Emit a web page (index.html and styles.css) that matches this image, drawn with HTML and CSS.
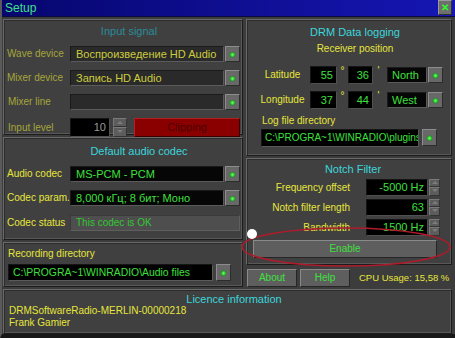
FILE: index.html
```html
<!DOCTYPE html>
<html lang="en">
<head>
    <meta charset="UTF-8">
    <title>Setup</title>
    <link rel="stylesheet" href="styles.css">
</head>
<body>
    <div class="window">
        <div class="titlebar">
            <span class="title">Setup</span>
            <span class="close">✕</span>
        </div>

        <div class="main">
            <div class="col">
                <!-- входной сигнал (неактивен) -->
                <section class="panel signal-panel off">
                    <div class="ptitle">Input signal</div>
                    <div class="row">
                        <label>Wave device</label>
                        <div class="combo"><span class="field">Воспроизведение HD Audio</span><span class="dbtn"></span></div>
                    </div>
                    <div class="row">
                        <label>Mixer device</label>
                        <div class="combo"><span class="field">Запись HD Audio</span><span class="dbtn"></span></div>
                    </div>
                    <div class="row">
                        <label class="indent">Mixer line</label>
                        <div class="combo"><span class="field"></span><span class="dbtn"></span></div>
                    </div>
                    <div class="row level-row">
                        <label class="indent">Input level</label>
                        <span class="numbox level">10</span>
                        <span class="spin"><i class="up"></i><i class="down"></i></span>
                        <span class="clipping">Clipping</span>
                    </div>
                </section>

                <section class="panel codec-panel">
                    <div class="ptitle">Default audio codec</div>
                    <div class="row">
                        <label>Audio codec</label>
                        <div class="combo"><span class="field">MS-PCM - PCM</span><span class="dbtn"></span></div>
                    </div>
                    <div class="row">
                        <label>Codec param.</label>
                        <div class="combo"><span class="field">8,000 кГц; 8 бит; Моно</span><span class="dbtn"></span></div>
                    </div>
                    <div class="row status-row">
                        <label>Codec status</label>
                        <span class="status">This codec is OK</span>
                    </div>
                </section>

                <section class="panel rec-panel">
                    <div class="plabel">Recording directory</div>
                    <div class="path-row">
                        <span class="path rec-path">C:\PROGRA~1\WINRADIO\Audio files</span>
                        <span class="dbtn"></span>
                    </div>
                </section>
            </div>

            <div class="col">
                <section class="panel drm-panel">
                    <div class="ptitle">DRM Data logging</div>
                    <div class="subtitle">Receiver position</div>
                    <div class="pos-row">
                        <label>Latitude</label>
                        <span class="numbox deg">55</span>
                        <span class="unit">°</span>
                        <span class="numbox min">36</span>
                        <span class="unit">'</span>
                        <div class="combo dir"><span class="field">North</span><span class="dbtn"></span></div>
                    </div>
                    <div class="pos-row">
                        <label>Longitude</label>
                        <span class="numbox deg">37</span>
                        <span class="unit">°</span>
                        <span class="numbox min">44</span>
                        <span class="unit">'</span>
                        <div class="combo dir"><span class="field">West</span><span class="dbtn"></span></div>
                    </div>
                    <div class="plabel log-label">Log file directory</div>
                    <div class="path-row log-row">
                        <span class="path log-path">C:\PROGRA~1\WINRADIO\plugins</span>
                        <span class="dbtn"></span>
                    </div>
                </section>

                <section class="panel notch-panel">
                    <div class="ptitle">Notch Filter</div>
                    <div class="notch-row">
                        <label>Frequency offset</label>
                        <span class="numbox val">-5000 Hz</span>
                        <span class="spin"><i class="up"></i><i class="down"></i></span>
                    </div>
                    <div class="notch-row">
                        <label>Notch filter length</label>
                        <span class="numbox val">63</span>
                        <span class="spin"><i class="up"></i><i class="down"></i></span>
                    </div>
                    <div class="notch-row">
                        <label>Bandwidth</label>
                        <span class="numbox val">1500 Hz</span>
                        <span class="spin"><i class="up"></i><i class="down"></i></span>
                    </div>
                    <button class="btn enable">Enable</button>
                </section>

                <div class="bottom-row">
                    <button class="btn small">About</button>
                    <button class="btn small">Help</button>
                    <span class="cpu">CPU Usage: 15,58 %</span>
                </div>
            </div>
        </div>

        <section class="panel licence-panel">
            <div class="ptitle">Licence information</div>
            <div class="lic-text">DRMSoftwareRadio-MERLIN-00000218</div>
            <div class="lic-text">Frank Gamier</div>
        </section>

        <!-- пометка поверх скриншота -->
        <svg class="mark" width="455" height="338" viewBox="0 0 455 338">
            <ellipse cx="346" cy="247" rx="104" ry="19" fill="none" stroke="#b01a2a" stroke-width="1.5"/>
            <circle cx="252" cy="234" r="5" fill="#ffffff"/>
        </svg>
    </div>
</body>
</html>
```

FILE: styles.css
```css
:root{
    --back: #3c3c3c;
    --panel: #404040;
    --light: #6a6a6a;
    --dark: #1c1c1c;
    --yellow: #e6e63c;
    --green: #3ee03e;
    --cyan: #3cd6dc;
    --btn: #5e5e5e;
}
* {
    box-sizing: border-box;
}
html, body {
    margin: 0;
    padding: 0;
    background: #000;
}
body {
    font-family: "Liberation Sans", Arial, sans-serif;
    font-size: 10px;
    color: var(--yellow);
}
.window {
    position: relative;
    width: 455px;
    height: 338px;
    background-color: var(--back);
    border-left: 2px solid #5a5a5a;
    border-bottom: 4px solid #181818;
    display: flex;
    flex-direction: column;
    overflow: hidden;
}
.titlebar {
    height: 17px;
    margin-left: -2px;
    background: linear-gradient(90deg, #06066e, #1616b4);
    display: flex;
    align-items: center;
    justify-content: space-between;
    padding: 0 3px 0 5px;
    border-bottom: 1px solid #0a0a40;
}
.title {
    color: #40e08a;
    font-size: 12px;
}
.close {
    width: 14px;
    height: 15px;
    background: #6e6e6e;
    border: 1px solid;
    border-color: #9a9a9a #303030 #303030 #9a9a9a;
    color: #2cff2c;
    font-size: 10px;
    font-weight: bold;
    line-height: 13px;
    text-align: center;
}
.main {
    display: grid;
    grid-template-columns: 240px 206px;
    gap: 3px;
    padding: 2px 0 0 1px;
}
.col {
    display: flex;
    flex-direction: column;
    gap: 2px;
}
.panel {
    background: var(--panel);
    border: 1px solid;
    border-color: var(--light) var(--dark) var(--dark) var(--light);
    box-shadow: inset 1px 1px 0 #2c2c2c, inset -1px -1px 0 #585858;
}
.ptitle {
    color: var(--cyan);
    font-size: 11px;
    line-height: 14px;
    height: 14px;
    text-align: center;
}
label {
    display: block;
    width: 63px;
    flex: none;
    white-space: nowrap;
}
.indent {
    padding-left: 1px;
}
.row {
    display: flex;
    align-items: center;
    height: 16px;
    margin-top: 8px;
    padding-left: 3px;
}

/* комбобоксы */
.combo {
    display: flex;
    height: 16px;
}
.field {
    width: 154px;
    height: 16px;
    background: #060606;
    border: 1px solid;
    border-color: #1a1a1a #5a5a5a #5a5a5a #1a1a1a;
    color: var(--green);
    font-size: 11px;
    line-height: 14px;
    padding-left: 5px;
    white-space: nowrap;
    overflow: hidden;
}
.dbtn {
    width: 15px;
    height: 16px;
    margin-left: 1px;
    background: radial-gradient(circle at 50% 55%, #7dff7d 0, #2ed62e 1.6px, #2a8a2a 2.6px, transparent 3.2px), #686868;
    border: 1px solid;
    border-color: #8c8c8c #2c2c2c #2c2c2c #8c8c8c;
    flex: none;
}

/* входной сигнал — неактивная панель */
.signal-panel {
    height: 116px;
    padding-top: 4px;
}
.signal-panel .ptitle {
    padding-left: 12px;
}
.off .ptitle {
    color: #2a8c98;
}
.off label {
    color: #a6a63a;
}
.off .field {
    background: #2a2a2a;
    color: #cccc3e;
}
.signal-panel .row:first-of-type {
    margin-top: 3px;
}
.level-row {
    height: 19px;
}
.numbox {
    display: block;
    height: 19px;
    background: #000;
    border: 1px solid;
    border-color: #151515 #505050 #505050 #151515;
    color: var(--green);
    font-size: 11px;
    line-height: 17px;
    text-align: right;
    padding-right: 3px;
    flex: none;
}
.level {
    width: 40px;
    color: #9a9a9a;
}
.spin {
    display: flex;
    flex-direction: column;
    width: 14px;
    height: 19px;
    margin-left: 3px;
    flex: none;
}
.spin i {
    flex: 1;
    background: #5c5c5c;
    border: 1px solid;
    border-color: #7a7a7a #333 #333 #7a7a7a;
    position: relative;
}
.spin i::after {
    content: "";
    position: absolute;
    left: 3px;
    top: 2px;
    border-left: 3px solid transparent;
    border-right: 3px solid transparent;
}
.spin .up::after {
    border-bottom: 3px solid #7c7c7c;
}
.spin .down::after {
    border-top: 3px solid #7c7c7c;
}
.clipping {
    width: 106px;
    height: 19px;
    margin-left: 7px;
    background: #8a0000;
    border: 1px solid;
    border-color: #b02020 #3a0000 #3a0000 #b02020;
    color: #4a0000;
    font-size: 11px;
    line-height: 17px;
    text-align: center;
}

/* кодек */
.codec-panel {
    height: 103px;
    padding-top: 6px;
}
.codec-panel .ptitle {
    padding-left: 32px;
}
.codec-panel .row:first-of-type {
    margin-top: 4px;
}
.status-row {
    margin-top: 9px;
}
.status {
    width: 170px;
    height: 16px;
    background: #4e4e4e;
    border: 1px solid;
    border-color: #3a3a3a #5e5e5e #5e5e5e #3a3a3a;
    color: #32c832;
    line-height: 14px;
    padding-left: 5px;
}

/* каталоги */
.plabel {
    line-height: 14px;
    height: 14px;
}
.rec-panel {
    height: 45px;
    padding: 4px 0 0 4px;
}
.path-row {
    display: flex;
    margin-top: 3px;
}
.path {
    height: 17px;
    background: #000;
    border: 1px solid;
    border-color: #151515 #5a5a5a #5a5a5a #151515;
    color: var(--green);
    font-size: 10.4px;
    line-height: 15px;
    padding-left: 4px;
    white-space: nowrap;
    overflow: hidden;
}
.rec-path {
    width: 205px;
}
.path-row .dbtn {
    height: 17px;
    margin-left: 3px;
}

/* DRM */
.drm-panel {
    height: 137px;
    padding-top: 5px;
}
.drm-panel .ptitle,
.subtitle {
    padding-left: 12px;
}
.subtitle {
    text-align: center;
    line-height: 14px;
    margin-top: 3px;
}
.pos-row {
    display: flex;
    align-items: center;
    height: 18px;
    margin-top: 10px;
    padding-left: 8px;
}
.pos-row + .pos-row {
    margin-top: 7px;
}
.pos-row label {
    width: 55px;
    text-align: center;
}
.numbox.deg {
    width: 27px;
    height: 18px;
}
.numbox.min {
    width: 25px;
    height: 18px;
}
.unit {
    width: 11px;
    text-align: center;
    align-self: flex-start;
    line-height: 10px;
    color: var(--yellow);
}
.combo.dir {
    margin-left: 3px;
}
.dir .field {
    width: 40px;
    padding-left: 4px;
}
.log-label {
    margin-top: 5px;
    padding-left: 15px;
}
.log-row {
    margin-top: 1px;
    padding-left: 14px;
}
.log-path {
    width: 158px;
    height: 18px;
    font-size: 10px;
    padding-left: 3px;
}

/* режекторный фильтр */
.notch-panel {
    height: 107px;
    padding-top: 3px;
}
.notch-panel .ptitle {
    padding-left: 8px;
}
.notch-row {
    display: flex;
    align-items: center;
    height: 17px;
    margin-top: 3px;
}
.notch-row:first-of-type {
    margin-top: 4px;
}
.notch-row label {
    width: 103px;
    text-align: right;
    margin-right: 16px;
}
.numbox.val {
    width: 62px;
    height: 17px;
    line-height: 15px;
}
.notch-row .spin {
    width: 11px;
    height: 17px;
    margin-left: 1px;
}
.notch-row .spin i::after {
    left: 2px;
    top: 1px;
}
.btn {
    display: block;
    font-family: inherit;
    background: var(--btn);
    border: 1px solid;
    border-color: #8a8a8a #262626 #262626 #8a8a8a;
    color: var(--green);
    font-size: 10px;
    padding: 0;
    cursor: pointer;
}
.enable {
    width: 184px;
    height: 18px;
    margin: 4px 0 0 6px;
}
.bottom-row {
    display: flex;
    align-items: center;
    height: 18px;
    margin-top: 2px;
    padding-left: 1px;
}
.btn.small {
    width: 50px;
    height: 18px;
    margin-right: 3px;
}
.cpu {
    margin-left: 6px;
    font-size: 9.5px;
    white-space: nowrap;
}

/* лицензия */
.licence-panel {
    height: 46px;
    margin: 2px 3px 0 1px;
    padding: 3px 0 0 5px;
}
.licence-panel .ptitle {
    line-height: 12px;
    height: 12px;
    padding-left: 8px;
}
.lic-text {
    line-height: 12px;
}

.mark {
    position: absolute;
    left: -2px;
    top: 0;
    pointer-events: none;
}
```
